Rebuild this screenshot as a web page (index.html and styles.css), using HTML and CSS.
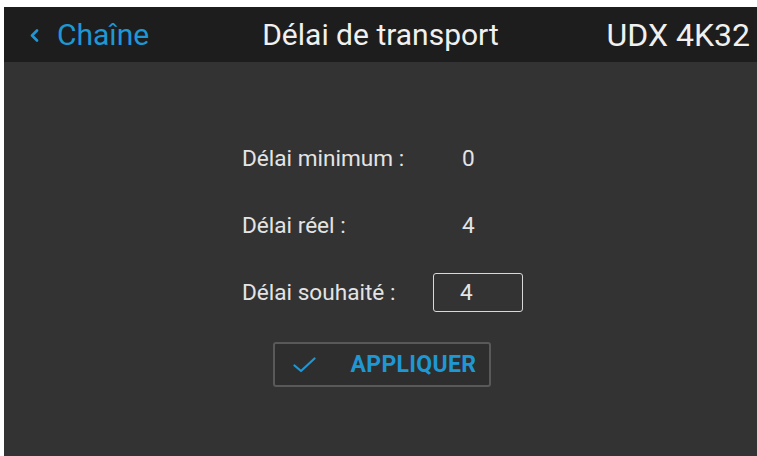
FILE: index.html
```html
<!DOCTYPE html>
<html lang="fr">
<head>
<meta charset="utf-8">
<title>Délai de transport</title>
<link rel="stylesheet" href="styles.css">
</head>
<body>
<div class="screen">
  <header class="topbar">
    <div class="back">
      <svg class="chevron" width="9" height="13" viewBox="0 0 9 13"><polyline points="7,1.5 2,6.5 7,11.5" fill="none" stroke="#1f97d4" stroke-width="2.6" stroke-linecap="round" stroke-linejoin="round"/></svg>
      <span class="back-label">Chaîne</span>
    </div>
    <div class="title">Délai de transport</div>
    <div class="device">UDX 4K32</div>
  </header>
  <main class="content">
    <div class="form">
      <div class="label">Délai minimum :</div>
      <div class="value">0</div>
      <div class="label">Délai réel :</div>
      <div class="value">4</div>
      <div class="label">Délai souhaité :</div>
      <div class="input">4</div>
    </div>
    <button class="apply" type="button">
      <svg class="check" width="23" height="16" viewBox="0 0 23 16"><polyline points="1.5,8.5 8,14 21.5,1.5" fill="none" stroke="#1f97d4" stroke-width="2.2" stroke-linecap="round" stroke-linejoin="round"/></svg>
      <span>APPLIQUER</span>
    </button>
  </main>
</div>
</body>
</html>
```
FILE: styles.css
```css
html, body {
  margin: 0;
  padding: 0;
  background: #ffffff;
}
body {
  font-family: Roboto, "Liberation Sans", sans-serif;
  width: 757px;
  height: 456px;
  overflow: hidden;
}
.screen {
  margin: 7px 0 0 4px;
  width: 753px;
  height: 449px;
  background: #333333;
  display: flex;
  flex-direction: column;
}
.topbar {
  height: 55px;
  background: #1d1d1d;
  display: grid;
  grid-template-columns: 1fr auto 1fr;
  align-items: center;
  font-size: 30px;
  color: #f0f0f0;
}
.back {
  display: flex;
  align-items: center;
  padding-left: 26px;
  gap: 18px;
  color: #1f97d4;
}
.chevron {
  display: block;
  margin-top: 1px;
}
.title {
  text-align: center;
}
.device {
  text-align: right;
  padding-right: 7px;
  font-size: 32px;
}
.content {
  flex: 1;
  display: flex;
  flex-direction: column;
  align-items: center;
  padding: 77px 0 0 4px;
}
.form {
  display: grid;
  grid-template-columns: 191px 90px;
  grid-auto-rows: 39px;
  row-gap: 28px;
  align-items: center;
  font-size: 22.6px;
  color: #e4e4e4;
}
.value {
  padding-left: 29px;
}
.input {
  box-sizing: border-box;
  height: 39px;
  border: 1.5px solid #d8d8d8;
  border-radius: 3px;
  padding-left: 26px;
  display: flex;
  align-items: center;
}
.apply {
  margin-top: 30px;
  margin-right: 2px;
  box-sizing: border-box;
  width: 218px;
  height: 45px;
  background: #2e2e2e;
  border: 2px solid #595959;
  border-radius: 3px;
  display: flex;
  align-items: center;
  padding: 0 0 0 18px;
  gap: 35px;
  font-family: Roboto, "Liberation Sans", sans-serif;
  font-weight: 700;
  font-size: 23px;
  color: #1f97d4;
  letter-spacing: 0.3px;
}
.check {
  display: block;
}
```
